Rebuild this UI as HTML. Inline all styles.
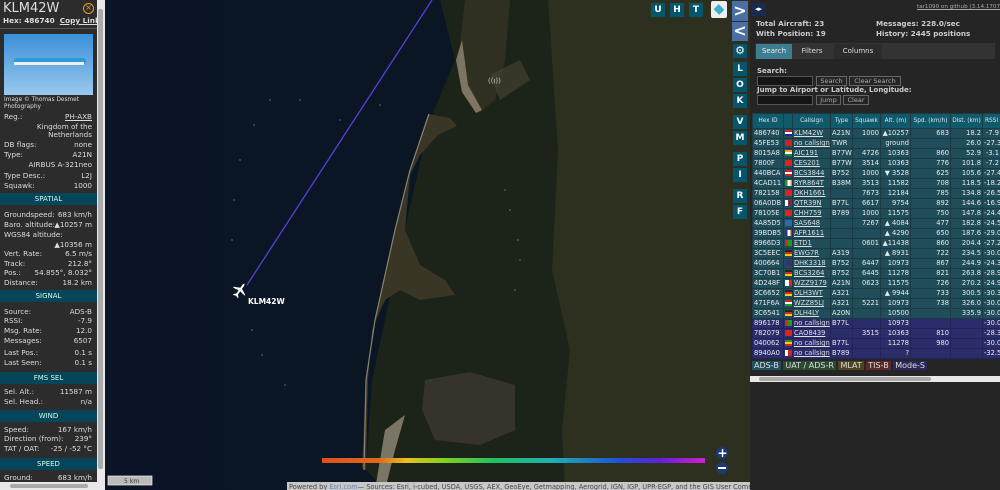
<!DOCTYPE html>
<html><head><meta charset="utf-8"><style>
*{margin:0;padding:0;box-sizing:border-box}
body{width:1000px;height:490px;overflow:hidden;background:#0b1628;font-family:"DejaVu Sans","Liberation Sans",sans-serif;position:relative}
.a{position:absolute}
#lp{left:0;top:0;width:97px;height:490px;background:#2c2c2c;color:#ddd;font-size:7.2px}
#lp .r{position:absolute;left:4px;right:5px;white-space:nowrap}
#lp .r b{font-weight:normal;position:absolute;right:0}
#lp .h{position:absolute;left:0;width:97px;height:12px;background:#07455a;color:#cfe;text-align:center;line-height:12px;font-size:7px}
.mb{position:absolute;width:14px;height:14px;background:#05566d;color:#fff;font-weight:bold;font-size:9px;text-align:center;line-height:14px}
#rp{left:750px;top:0;width:250px;height:490px;background:#252525;color:#ddd;font-size:7px}
table{border-collapse:collapse;position:absolute;left:752px;top:113px;width:248px;font-size:6.7px;color:#e8e8e8;table-layout:fixed}
td{height:10px;line-height:9px;padding:0 1px;border:1px solid #1c3a44;white-space:nowrap;overflow:hidden;background:#1f4d5a}
th{height:15px;font-weight:normal;background:#115a6b;color:#d0ecf0;font-size:5.8px;border:1px solid #1c3a44;white-space:nowrap;overflow:hidden}
tr.m td{background:#2b2c6a;border-color:#22235a}
td.n{text-align:right}
td u{color:#ddd}
.f{display:inline-block;width:8px;height:6px;vertical-align:middle}
</style></head><body>
<!-- map -->
<svg class="a" style="left:105px;top:0" width="645" height="490" viewBox="105 0 645 490">
<defs>
<linearGradient id="g"><stop offset="0" stop-color="#e0501a"/><stop offset=".15" stop-color="#e06a1a"/><stop offset=".22" stop-color="#e6c020"/><stop offset=".32" stop-color="#80d020"/><stop offset=".45" stop-color="#20c060"/><stop offset=".6" stop-color="#20b0b0"/><stop offset=".78" stop-color="#2050d8"/><stop offset=".88" stop-color="#6020d8"/><stop offset="1" stop-color="#d020c8"/></linearGradient>
<linearGradient id="sea" x1="0" x2="1"><stop offset="0" stop-color="#0a1426"/><stop offset=".6" stop-color="#0b1624"/><stop offset="1" stop-color="#121c1e"/></linearGradient>
</defs>
<rect x="105" y="0" width="645" height="490" fill="url(#sea)"/>
<path d="M440 0 L620 0 L620 490 L385 490 L366 470 L372 380 L400 250 L430 120 L455 60Z" fill="#1c2318"/>
<path d="M548 0 L750 0 L750 490 L565 490 L562 430 L570 350 L552 270 L558 150 L552 60Z" fill="#2d2f1f"/>
<path d="M465 0 L510 0 L505 60 L495 100 L480 112 L468 90 L460 45Z" fill="#2f3022"/>
<path d="M462 40 L468 85 L482 110 L476 113 L462 92 L456 60Z" fill="#7d7462"/>
<path d="M490 75 L520 60 L530 80 L500 100Z" fill="#4a4436" opacity=".6"/>
<path d="M428 114 L450 118 L457 126 L438 135 L420 155 L410 175 L405 230 L420 265 L445 280 L455 295 L420 300 L400 290 L385 300 L372 330 L368 380 L366 470 L362 468 L366 380 L375 320 L395 230 L410 170Z" fill="#3a3626"/>
<path d="M429 114 L410 170 L395 230 L375 320 L366 380 L364 470" stroke="#8a826e" stroke-width="1.2" fill="none"/>
<path d="M425 380 L470 372 L515 385 L515 430 L480 445 L435 440 L422 410Z" fill="#36342a"/>
<path d="M385 430 L405 415 L395 450 L385 490 L375 490Z" fill="#7a7564"/>
<line x1="432" y1="0" x2="247" y2="285" stroke="#5a3fd8" stroke-width="1.3"/>
<g transform="translate(240 290) rotate(35)" fill="#fff"><path d="M0-8 L1-6 L1-2 L7 1 L7 2 L1 1 L1 5 L3 7 L3 8 L0 7 L-3 8 L-3 7 L-1 5 L-1 1 L-7 2 L-7 1 L-1-2 L-1-6Z"/></g>
<text x="248" y="304" fill="#fff" font-size="7.5" font-weight="bold" font-family="DejaVu Sans">KLM42W</text>
<text x="488" y="83" fill="#ccc" font-size="7" font-family="DejaVu Sans">((ı))</text>
<g fill="#9aa">
<circle cx="270" cy="100" r=".6"/><circle cx="254" cy="125" r=".6"/><circle cx="240" cy="160" r=".6"/><circle cx="234" cy="200" r=".6"/><circle cx="232" cy="240" r=".6"/><circle cx="252" cy="330" r=".6"/><circle cx="262" cy="355" r=".6"/><circle cx="285" cy="385" r=".6"/><circle cx="300" cy="100" r=".6"/><circle cx="340" cy="120" r=".6"/><circle cx="380" cy="105" r=".6"/>
<circle cx="505" cy="190" r=".6"/><circle cx="510" cy="210" r=".6"/><circle cx="518" cy="240" r=".6"/><circle cx="520" cy="260" r=".6"/><circle cx="515" cy="290" r=".6"/>
</g>
<rect x="322" y="458" width="383" height="5" fill="url(#g)"/>
<circle cx="722" cy="453" r="6" fill="#1a3a70"/><text x="717.5" y="457" fill="#fff" font-size="12" font-weight="bold">+</text>
<circle cx="722" cy="468" r="6" fill="#1a3a70"/><rect x="718" y="467" width="8" height="2" fill="#fff"/>
<rect x="108" y="476" width="44" height="9" fill="#bbb" stroke="#eee" stroke-width=".7"/>
<text x="124" y="483" font-size="6" fill="#333">5 km</text>
<rect x="287" y="482" width="463" height="8" fill="#c8c8c8"/>
<text x="289" y="489" font-size="6.6" fill="#444" font-family="DejaVu Sans">Powered by <tspan fill="#68a">Esri.com</tspan>— Sources: Esri, i-cubed, USDA, USGS, AEX, GeoEye, Getmapping, Aerogrid, IGN, IGP, UPR-EGP, and the GIS User Community</text>
</svg>
<div class="mb" style="left:651px;top:3px">U</div><div class="mb" style="left:670px;top:3px">H</div><div class="mb" style="left:689px;top:3px">T</div>
<div class="a" style="left:711px;top:1px;width:16px;height:17px;background:#eee;border-radius:2px"><div class="a" style="left:3px;top:4px;width:10px;height:9px;background:#3ab0c8;transform:rotate(45deg) scale(.8)"></div></div>
<div class="mb" style="left:732px;top:1px;width:16px;height:20px;background:#4a6fa6;font-size:16px;line-height:19px">&gt;</div>
<div class="mb" style="left:732px;top:22px;width:16px;height:19px;background:#4a6fa6;font-size:16px;line-height:18px">&lt;</div>
<div class="mb" style="left:733px;top:44px;font-size:11px">⚙</div>
<div class="mb" style="left:733px;top:62px">L</div><div class="mb" style="left:733px;top:78px">O</div><div class="mb" style="left:733px;top:94px">K</div>
<div class="mb" style="left:733px;top:115px">V</div><div class="mb" style="left:733px;top:131px">M</div>
<div class="mb" style="left:733px;top:152px">P</div><div class="mb" style="left:733px;top:168px">I</div>
<div class="mb" style="left:733px;top:189px">R</div><div class="mb" style="left:733px;top:205px">F</div>
<!-- left panel -->
<div class="a" id="lp">
<div class="a" style="left:3px;top:1px;font-size:13px;color:#ddd">KLM42W</div>
<div class="a" style="left:83px;top:3px;width:11px;height:11px;border:1.3px solid #e0a020;border-radius:50%;color:#e0a020;font-size:8px;line-height:8px;text-align:center">×</div>
<div class="a" style="left:3px;top:16px;font-size:7.3px;font-weight:bold;white-space:nowrap">Hex: 486740 &nbsp;<u>Copy Link</u></div>
<div class="a" style="left:0;top:28px;width:97px;height:1px;background:#555"></div>
<div class="a" style="left:4px;top:34px;width:89px;height:61px;background:linear-gradient(#3a90d8,#9ac8ee)"><div class="a" style="left:10px;top:24px;width:72px;height:6px;background:#2a9ad8;border-radius:3px"></div><div class="a" style="left:10px;top:28px;width:70px;height:3px;background:#eee"></div></div>
<div class="a" style="left:4px;top:97px;font-size:5.8px;line-height:6.5px">Image © Thomas Desmet<br>Photography</div>
<div class="r" style="top:112px">Reg.:<b><u>PH-AXB</u></b></div>
<div class="r" style="top:122px"><b>Kingdom of the</b></div>
<div class="r" style="top:130px"><b>Netherlands</b></div>
<div class="r" style="top:140px">DB flags:<b>none</b></div>
<div class="r" style="top:150px">Type:<b>A21N</b></div>
<div class="r" style="top:160px"><b>AIRBUS A-321neo</b></div>
<div class="r" style="top:171px">Type Desc.:<b>L2J</b></div>
<div class="r" style="top:181px">Squawk:<b>1000</b></div>
<div class="h" style="top:193px">SPATIAL</div>
<div class="r" style="top:210px">Groundspeed:<b>683 km/h</b></div>
<div class="r" style="top:220px">Baro. altitude:<b>▲10257 m</b></div>
<div class="r" style="top:230px">WGS84 altitude:</div>
<div class="r" style="top:240px"><b>▲10356 m</b></div>
<div class="r" style="top:249px">Vert. Rate:<b>6.5 m/s</b></div>
<div class="r" style="top:259px">Track:<b>212.8°</b></div>
<div class="r" style="top:268px">Pos.:<b>54.855°, 8.032°</b></div>
<div class="r" style="top:278px">Distance:<b>18.2 km</b></div>
<div class="h" style="top:290px">SIGNAL</div>
<div class="r" style="top:307px">Source:<b>ADS-B</b></div>
<div class="r" style="top:316px">RSSI:<b>-7.9</b></div>
<div class="r" style="top:326px">Msg. Rate:<b>12.0</b></div>
<div class="r" style="top:336px">Messages:<b>6507</b></div>
<div class="r" style="top:348px">Last Pos.:<b>0.1 s</b></div>
<div class="r" style="top:358px">Last Seen:<b>0.1 s</b></div>
<div class="h" style="top:372px">FMS SEL</div>
<div class="r" style="top:387px">Sel. Alt.:<b>11587 m</b></div>
<div class="r" style="top:397px">Sel. Head.:<b>n/a</b></div>
<div class="h" style="top:410px">WIND</div>
<div class="r" style="top:425px">Speed:<b>167 km/h</b></div>
<div class="r" style="top:434px">Direction (from):<b>239°</b></div>
<div class="r" style="top:444px">TAT / OAT:<b>-25 / -52 °C</b></div>
<div class="h" style="top:458px">SPEED</div>
<div class="r" style="top:473px">Ground:<b>683 km/h</b></div>
</div>
<div class="a" style="left:97px;top:0;width:8px;height:482px;background:#e8e8e8"><div class="a" style="left:1px;top:9px;width:5px;height:460px;background:#aaa;border-radius:2px"></div></div>
<div class="a" style="left:0;top:482px;width:105px;height:8px;background:#e8e8e8"><div class="a" style="left:10px;top:2px;width:78px;height:4px;background:#aaa;border-radius:2px"></div></div>
<!-- right panel -->
<div class="a" id="rp">
<div class="a" style="left:1px;top:3px;width:15px;height:13px;background:#1a2a50;color:#fff;font-size:7px;text-align:center;line-height:13px">◂▸</div>
<div class="a" style="left:167px;top:4px;font-size:5.6px;color:#aaa;text-decoration:underline;white-space:nowrap">tar1090 on github (3.14.1707)</div>
<div class="a" style="left:6px;top:19px;font-weight:bold;font-size:7.2px;line-height:10px;color:#ccc">Total Aircraft: 23<br>With Position: 19</div>
<div class="a" style="left:126px;top:19px;font-weight:bold;font-size:7.2px;line-height:10px;color:#ccc">Messages: 228.0/sec<br>History: 2445 positions</div>
<div class="a" style="left:5px;top:43px;width:240px;height:16px;background:#333"></div>
<div class="a" style="left:6px;top:44px;width:36px;height:15px;background:#3c7e90;color:#eee;line-height:15px;text-align:center">Search</div>
<div class="a" style="left:42px;top:44px;width:40px;height:15px;color:#ddd;line-height:15px;text-align:center">Filters</div>
<div class="a" style="left:84px;top:44px;width:48px;height:15px;background:#2b2b2b;color:#ddd;line-height:15px;text-align:center">Columns</div>
<div class="a" style="left:7px;top:67px;font-weight:bold;color:#ccc">Search:</div>
<div class="a" style="left:7px;top:76px;width:56px;height:10px;background:#151515;border:1px solid #555"></div>
<div class="a" style="left:66px;top:76px;width:31px;height:10px;border:1px solid #666;color:#aaa;font-size:6.5px;line-height:8px;text-align:center">Search</div>
<div class="a" style="left:99px;top:76px;width:52px;height:10px;border:1px solid #666;color:#aaa;font-size:6.5px;line-height:8px;text-align:center">Clear Search</div>
<div class="a" style="left:7px;top:86px;font-weight:bold;color:#ccc">Jump to Airport or Latitude, Longitude:</div>
<div class="a" style="left:7px;top:95px;width:56px;height:10px;background:#151515;border:1px solid #555"></div>
<div class="a" style="left:66px;top:95px;width:25px;height:10px;border:1px solid #666;color:#aaa;font-size:6.5px;line-height:8px;text-align:center">Jump</div>
<div class="a" style="left:93px;top:95px;width:26px;height:10px;border:1px solid #666;color:#aaa;font-size:6.5px;line-height:8px;text-align:center">Clear</div>
<div class="a" style="left:2px;top:360px;font-size:8px;white-space:nowrap;line-height:12px">
<span style="background:#23505e;padding:0 2px">ADS-B</span> <span style="background:#2a4a32;padding:0 2px">UAT / ADS-R</span> <span style="background:#4e4520;padding:0 2px">MLAT</span> <span style="background:#5a2a2a;padding:0 2px">TIS-B</span> <span style="background:#2a2a5a;padding:0 2px">Mode-S</span></div>
<div class="a" style="left:0;top:376px;width:250px;height:6px;background:#e8e8e8"><div class="a" style="left:9px;top:1px;width:172px;height:4px;background:#aaa;border-radius:2px"></div></div>
</div>
<table>
<colgroup><col style="width:31px"><col style="width:9px"><col style="width:38px"><col style="width:22px"><col style="width:28px"><col style="width:30px"><col style="width:40px"><col style="width:32px"><col style="width:18px"></colgroup>
<tr><th>Hex ID</th><th></th><th>Callsign</th><th>Type</th><th>Squawk</th><th>Alt. (m)</th><th>Spd. (km/h)</th><th>Dist. (km)</th><th>RSSI</th></tr>
<tr><td>486740</td><td><span class="f" style="background:linear-gradient(#c22 33%,#fff 33% 66%,#22a 66%)"></span></td><td><u>KLM42W</u></td><td>A21N</td><td class="n">1000</td><td class="n">▲10257</td><td class="n">683</td><td class="n">18.2</td><td class="n">-7.9</td></tr>
<tr><td>45FE53</td><td><span class="f" style="background:#c22"></span></td><td><u>no callsign</u></td><td>TWR</td><td></td><td class="n">ground</td><td></td><td class="n">26.0</td><td class="n">-27.3</td></tr>
<tr><td>8015A8</td><td><span class="f" style="background:linear-gradient(#f93 33%,#fff 33% 66%,#282 66%)"></span></td><td><u>AIC191</u></td><td>B77W</td><td class="n">4726</td><td class="n">10363</td><td class="n">860</td><td class="n">52.9</td><td class="n">-3.1</td></tr>
<tr><td>7800F</td><td><span class="f" style="background:#d22"></span></td><td><u>CES201</u></td><td>B77W</td><td class="n">3514</td><td class="n">10363</td><td class="n">776</td><td class="n">101.8</td><td class="n">-7.2</td></tr>
<tr><td>440BCA</td><td><span class="f" style="background:linear-gradient(#c22 33%,#fff 33% 66%,#c22 66%)"></span></td><td><u>BCS3844</u></td><td>B752</td><td class="n">1000</td><td class="n">▼ 3528</td><td class="n">625</td><td class="n">105.6</td><td class="n">-27.4</td></tr>
<tr><td>4CAD11</td><td><span class="f" style="background:linear-gradient(90deg,#292 33%,#fff 33% 66%,#f82 66%)"></span></td><td><u>RYR864T</u></td><td>B38M</td><td class="n">3513</td><td class="n">11582</td><td class="n">708</td><td class="n">118.5</td><td class="n">-18.2</td></tr>
<tr><td>782158</td><td><span class="f" style="background:#d22"></span></td><td><u>DKH1661</u></td><td></td><td class="n">7673</td><td class="n">12184</td><td class="n">785</td><td class="n">134.8</td><td class="n">-26.5</td></tr>
<tr><td>06A0DB</td><td><span class="f" style="background:linear-gradient(90deg,#fff 35%,#824 35%)"></span></td><td><u>QTR39N</u></td><td>B77L</td><td class="n">6617</td><td class="n">9754</td><td class="n">892</td><td class="n">144.6</td><td class="n">-16.9</td></tr>
<tr><td>78105E</td><td><span class="f" style="background:#d22"></span></td><td><u>CHH759</u></td><td>B789</td><td class="n">1000</td><td class="n">11575</td><td class="n">750</td><td class="n">147.8</td><td class="n">-24.4</td></tr>
<tr><td>4A85D5</td><td><span class="f" style="background:#36a"></span></td><td><u>SAS648</u></td><td></td><td class="n">7267</td><td class="n">▲ 4084</td><td class="n">477</td><td class="n">182.8</td><td class="n">-24.5</td></tr>
<tr><td>39BDB5</td><td><span class="f" style="background:linear-gradient(90deg,#23a 33%,#fff 33% 66%,#d22 66%)"></span></td><td><u>AFR1611</u></td><td></td><td></td><td class="n">▲ 4290</td><td class="n">650</td><td class="n">187.6</td><td class="n">-29.0</td></tr>
<tr><td>8966D3</td><td><span class="f" style="background:linear-gradient(90deg,#d22 30%,#292 30%)"></span></td><td><u>ETD1</u></td><td></td><td class="n">0601</td><td class="n">▲11438</td><td class="n">860</td><td class="n">204.4</td><td class="n">-27.2</td></tr>
<tr><td>3C5EEC</td><td><span class="f" style="background:linear-gradient(#222 33%,#d22 33% 66%,#fc0 66%)"></span></td><td><u>EWG7R</u></td><td>A319</td><td></td><td class="n">▲ 8931</td><td class="n">722</td><td class="n">234.5</td><td class="n">-30.0</td></tr>
<tr><td>400664</td><td><span class="f" style="background:#337"></span></td><td><u>DHK3318</u></td><td>B752</td><td class="n">6447</td><td class="n">10973</td><td class="n">867</td><td class="n">244.9</td><td class="n">-24.3</td></tr>
<tr><td>3C70B1</td><td><span class="f" style="background:linear-gradient(#222 33%,#d22 33% 66%,#fc0 66%)"></span></td><td><u>BCS3264</u></td><td>B752</td><td class="n">6445</td><td class="n">11278</td><td class="n">821</td><td class="n">263.8</td><td class="n">-28.9</td></tr>
<tr><td>4D248F</td><td><span class="f" style="background:linear-gradient(90deg,#fff 50%,#d22 50%)"></span></td><td><u>WZZ9179</u></td><td>A21N</td><td class="n">0623</td><td class="n">11575</td><td class="n">726</td><td class="n">270.2</td><td class="n">-24.9</td></tr>
<tr><td>3C6652</td><td><span class="f" style="background:linear-gradient(#222 33%,#d22 33% 66%,#fc0 66%)"></span></td><td><u>DLH3WT</u></td><td>A321</td><td></td><td class="n">▲ 9944</td><td class="n">733</td><td class="n">300.5</td><td class="n">-30.3</td></tr>
<tr><td>471F6A</td><td><span class="f" style="background:linear-gradient(#c22 33%,#fff 33% 66%,#292 66%)"></span></td><td><u>WZZ85LJ</u></td><td>A321</td><td class="n">5221</td><td class="n">10973</td><td class="n">738</td><td class="n">326.0</td><td class="n">-30.0</td></tr>
<tr><td>3C6541</td><td><span class="f" style="background:linear-gradient(#222 33%,#d22 33% 66%,#fc0 66%)"></span></td><td><u>DLH4LY</u></td><td>A20N</td><td></td><td class="n">10500</td><td></td><td class="n">335.9</td><td class="n">-30.0</td></tr>
<tr class="m"><td>896178</td><td><span class="f" style="background:linear-gradient(90deg,#d22 30%,#292 30%)"></span></td><td><u>no callsign</u></td><td>B77L</td><td></td><td class="n">10973</td><td></td><td></td><td class="n">-30.0</td></tr>
<tr class="m"><td>782079</td><td><span class="f" style="background:#d22"></span></td><td><u>CAO8439</u></td><td></td><td class="n">3515</td><td class="n">10363</td><td class="n">810</td><td></td><td class="n">-28.3</td></tr>
<tr class="m"><td>040062</td><td><span class="f" style="background:linear-gradient(#292 33%,#fc0 33% 66%,#d22 66%)"></span></td><td><u>no callsign</u></td><td>B77L</td><td></td><td class="n">11278</td><td class="n">980</td><td></td><td class="n">-30.0</td></tr>
<tr class="m"><td>8940A0</td><td><span class="f" style="background:linear-gradient(90deg,#fff 35%,#c22 35%)"></span></td><td><u>no callsign</u></td><td>B789</td><td></td><td class="n">?</td><td></td><td></td><td class="n">-32.5</td></tr>
</table>
</body></html>
